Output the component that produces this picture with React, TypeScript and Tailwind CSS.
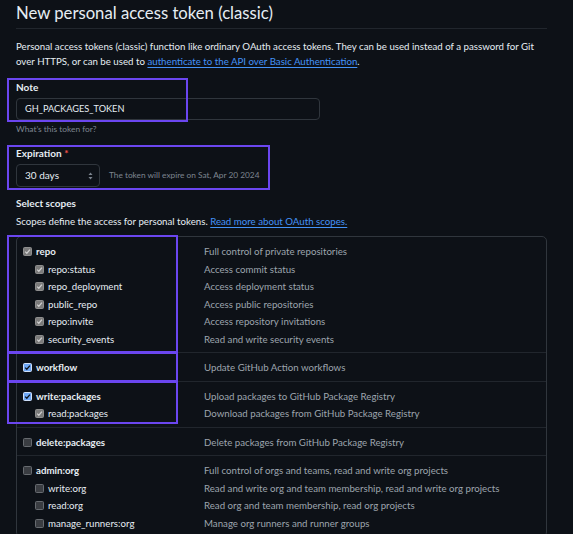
type Row = { label: string; desc: string; sub?: boolean; state: "gray" | "blue" | "off" };

const groups: Row[][] = [
  [
    { label: "repo", desc: "Full control of private repositories", state: "gray" },
    { label: "repo:status", desc: "Access commit status", sub: true, state: "gray" },
    { label: "repo_deployment", desc: "Access deployment status", sub: true, state: "gray" },
    { label: "public_repo", desc: "Access public repositories", sub: true, state: "gray" },
    { label: "repo:invite", desc: "Access repository invitations", sub: true, state: "gray" },
    { label: "security_events", desc: "Read and write security events", sub: true, state: "gray" },
  ],
  [{ label: "workflow", desc: "Update GitHub Action workflows", state: "blue" }],
  [
    { label: "write:packages", desc: "Upload packages to GitHub Package Registry", state: "blue" },
    { label: "read:packages", desc: "Download packages from GitHub Package Registry", sub: true, state: "gray" },
  ],
  [{ label: "delete:packages", desc: "Delete packages from GitHub Package Registry", state: "off" }],
  [
    { label: "admin:org", desc: "Full control of orgs and teams, read and write org projects", state: "off" },
    { label: "write:org", desc: "Read and write org and team membership, read and write org projects", sub: true, state: "off" },
    { label: "read:org", desc: "Read org and team membership, read org projects", sub: true, state: "off" },
    { label: "manage_runners:org", desc: "Manage org runners and runner groups", sub: true, state: "off" },
  ],
];

function Box({ state }: { state: Row["state"] }) {
  if (state === "off") {
    return <span className="w-[9px] h-[9px] rounded-[1.5px] bg-[#3a3d42] border border-[#676b70] shrink-0" />;
  }
  const blue = state === "blue";
  return (
    <span
      className={
        blue
          ? "w-[9px] h-[9px] rounded-[1.5px] bg-[#6fa8f7] border border-[#cfe0fb] shrink-0 flex items-center justify-center"
          : "w-[9px] h-[9px] rounded-[1.5px] bg-[#7b7b7b] border border-[#8e8e8e] shrink-0 flex items-center justify-center"
      }
    >
      <svg width="7" height="7" viewBox="0 0 8 8">
        <path d="M1.3 4.2 L3.2 6 L6.8 1.8" fill="none" stroke={blue ? "#0d1117" : "#cfcfcf"} strokeWidth="1.4" />
      </svg>
    </span>
  );
}

function Highlight({ className }: { className: string }) {
  return <div className={"absolute border-2 border-[#6b46f0] pointer-events-none " + className} />;
}

export default function App() {
  return (
    <div
      className="relative w-[573px] h-[534px] overflow-hidden bg-[#0d1117] text-[#e6edf3]"
      style={{ fontFamily: "Lato, 'Liberation Sans', sans-serif" }}
    >
      <div className="pl-4 pr-[26px]">
        <div className="h-[29px] border-b border-[#21262d] flex items-center">
          <h1 className="text-[16.7px] leading-[28px] font-normal text-[#e6edf3] -mt-[2px]">New personal access token (classic)</h1>
        </div>

        <p className="mt-[10px] text-[9.7px] leading-[15px] whitespace-nowrap">
          Personal access tokens (classic) function like ordinary OAuth access tokens. They can be used instead of a password for Git
          <br />
          over HTTPS, or can be used to{" "}
          <span className="text-[#4493f8] underline underline-offset-2">authenticate to the API over Basic Authentication</span>.
        </p>

        <div className="mt-[11px] text-[10px] leading-[14px] font-bold">Note</div>
        <div className="mt-[4px] w-[304px] h-[22px] border border-[#30363d] rounded-[4px] flex items-center pl-[8px] text-[9.2px]">
          GH_PACKAGES_TOKEN
        </div>
        <div className="mt-[3px] text-[8.4px] leading-[12px] text-[#7d8590]">What’s this token for?</div>

        <div className="mt-[11px] text-[10px] leading-[14px] font-bold">
          Expiration <span className="text-[#f85149]">*</span>
        </div>
        <div className="mt-[4px] flex items-center">
          <div className="w-[84px] h-[23px] border border-[#30363d] rounded-[4px] bg-[#0d1117] flex items-center justify-between pl-[8px] pr-[6px] text-[10px]">
            <span>30 days</span>
            <svg width="5" height="8" viewBox="0 0 5 8">
              <path d="M2.5 0.5 L4.5 3 L0.5 3 Z" fill="#7d8590" />
              <path d="M2.5 7.5 L4.5 5 L0.5 5 Z" fill="#7d8590" />
            </svg>
          </div>
          <span className="ml-[9px] text-[8.3px] text-[#7d8590]">The token will expire on Sat, Apr 20 2024</span>
        </div>

        <div className="mt-[9px] text-[10px] leading-[14px] font-bold">Select scopes</div>
        <div className="mt-[4px] text-[9.7px] leading-[15px]">
          Scopes define the access for personal tokens.{" "}
          <span className="text-[#4493f8] underline underline-offset-2">Read more about OAuth scopes.</span>
        </div>

        <div className="mt-[7px] border border-[#30363d] rounded-[5px]">
          {groups.map((g, gi) => (
            <div key={gi} className={"pt-[6px] pb-[4px] " + (gi > 0 ? "border-t border-[#21262d]" : "")}>
              {g.map((r) => (
                <div key={r.label} className="h-[17.5px] flex items-center text-[9.7px]">
                  <div className={"w-[187px] shrink-0 flex items-center gap-[4px] " + (r.sub ? "pl-[18px]" : "pl-[6px]")}>
                    <Box state={r.state} />
                    <span className={r.sub ? "text-[#e6edf3]" : "font-bold text-[#e6edf3]"}>{r.label}</span>
                  </div>
                  <span className="text-[#9da5ae] whitespace-nowrap">{r.desc}</span>
                </div>
              ))}
            </div>
          ))}
        </div>
      </div>

      <Highlight className="left-[7px] top-[78px] w-[181px] h-[44px]" />
      <Highlight className="left-[7px] top-[145px] w-[263px] h-[45px]" />
      <Highlight className="left-[7px] top-[235px] w-[171px] h-[118px]" />
      <Highlight className="left-[7px] top-[352px] w-[171px] h-[30px]" />
      <Highlight className="left-[7px] top-[381px] w-[171px] h-[43px]" />
    </div>
  );
}
